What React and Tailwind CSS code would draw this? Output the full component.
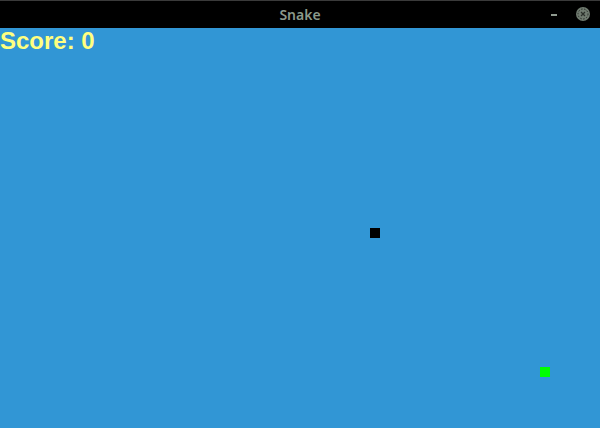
import React from 'react';

// Snake window: title bar + game canvas
const App = () => {
  return (
    <div className="w-[600px] h-[428px] flex flex-col overflow-hidden">
      {/* Title bar */}
      <div className="h-[28px] bg-black border-t border-[#3a3a3a] flex items-center relative">
        <div className="flex-1 text-center text-[14px] font-semibold text-[#8a998a] pb-[1px]" style={{ fontFamily: '"Noto Sans", sans-serif' }}>
          Snake
        </div>
        <div className="absolute right-[9px] top-[5px] flex items-center gap-[18px]">
          <div className="w-[6px] h-[2px] bg-[#8f9a8f] mt-[1px]"></div>
          <svg width="16" height="16" viewBox="0 0 16 16">
            <circle cx="8" cy="8" r="7" fill="#6f7a6f" />
            <circle cx="8" cy="8" r="5" fill="none" stroke="#2a2f2a" strokeWidth="1" strokeDasharray="1.5 1.5" />
            <path d="M6 6 L10 10 M10 6 L6 10" stroke="#2a2f2a" strokeWidth="1.2" />
          </svg>
        </div>
      </div>

      {/* Game area */}
      <div className="flex-1 bg-[#3196d5] relative">
        <div className="text-[24px] font-bold text-[#ffff80] leading-none pt-[1px]" style={{ fontFamily: '"Liberation Sans", Arial, sans-serif' }}>
          Score: 0
        </div>
        <div className="absolute left-[370px] top-[200px] w-[10px] h-[10px] bg-black"></div>
        <div className="absolute left-[540px] top-[339px] w-[10px] h-[10px] bg-[#00ff00]"></div>
      </div>
    </div>
  );
};

export default App;
